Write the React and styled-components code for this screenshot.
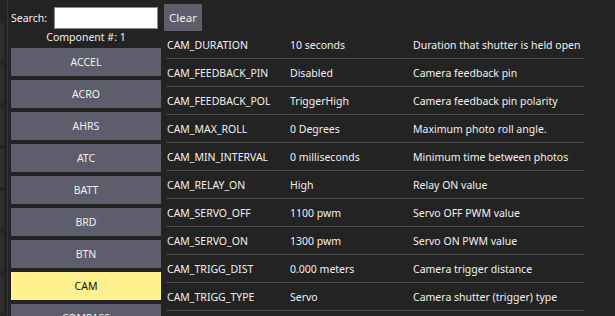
import React from 'react'
import styled, { createGlobalStyle } from 'styled-components'

const GlobalStyle = createGlobalStyle`
    html, body {
        margin: 0;
        background: #232323;
        font-family: "Noto Sans", "Open Sans", sans-serif;
        font-size: 10.5px;
        color: #f0f0f0;
        overflow: hidden;
    }
`

const Page = styled.div`
    display: flex;
    height: 316px;
`

const Strip = styled.div`
    width: 4px;
    display: flex;
    flex-direction: column;
    gap: 4px;
    padding-top: 23px;
`

const StripBlock = styled.div`
    height: 38px;
    flex-shrink: 0;
    background: #2e2e2e;
`

const Divider = styled.div`
    width: 1px;
    margin-left: 3px;
    background: #353535;
`

const Main = styled.div`
    display: grid;
    grid-template-columns: 150px 1fr;
    grid-template-rows: 31px 1fr;
    column-gap: 3px;
    margin-left: 3px;
`

const SearchRow = styled.div`
    display: flex;
    align-items: flex-start;
    gap: 4px;
    padding-top: 7px;
`

const Label = styled.label`
    width: 39px;
    line-height: 22px;
`

const SearchInput = styled.input`
    width: 104px;
    height: 22px;
    box-sizing: border-box;
    border: 1px solid #8a8a8a;
    background: #fff;
    padding: 0 3px;
    margin: 0;
    outline: none;
`

const HeaderCell = styled.div`
    display: flex;
    align-items: flex-start;
    padding-top: 4px;
`

const ClearButton = styled.button`
    height: 27px;
    width: 38px;
    padding: 0;
    border: none;
    background: #5e5d6c;
    color: #f0f0f0;
    font-family: inherit;
    font-size: 11.5px;
`

const Sidebar = styled.div`
    display: flex;
    flex-direction: column;
    gap: 4px;
    overflow: hidden;
`

const Count = styled.div`
    text-align: center;
    line-height: 13px;
`

const Component = styled.div`
    height: 28px;
    flex-shrink: 0;
    display: flex;
    align-items: center;
    justify-content: center;
    background: ${({ $active }) => ($active ? '#fff18e' : '#5e5d6c')};
    color: ${({ $active }) => ($active ? '#111' : '#f0f0f0')};
`

const Table = styled.div`
    margin-left: 2px;
    width: 418px;
`

const Row = styled.div`
    display: grid;
    grid-template-columns: 123px 123px 1fr;
    height: 27px;
    align-items: center;
    border-bottom: 1px solid #4a4a4a;
    padding-left: 1px;
`

const Cell = styled.div`
    white-space: nowrap;
`

const components = ['ACCEL', 'ACRO', 'AHRS', 'ATC', 'BATT', 'BRD', 'BTN', 'CAM', 'COMPASS']

const params = [
    ['CAM_DURATION', '10 seconds', 'Duration that shutter is held open'],
    ['CAM_FEEDBACK_PIN', 'Disabled', 'Camera feedback pin'],
    ['CAM_FEEDBACK_POL', 'TriggerHigh', 'Camera feedback pin polarity'],
    ['CAM_MAX_ROLL', '0 Degrees', 'Maximum photo roll angle.'],
    ['CAM_MIN_INTERVAL', '0 milliseconds', 'Minimum time between photos'],
    ['CAM_RELAY_ON', 'High', 'Relay ON value'],
    ['CAM_SERVO_OFF', '1100 pwm', 'Servo OFF PWM value'],
    ['CAM_SERVO_ON', '1300 pwm', 'Servo ON PWM value'],
    ['CAM_TRIGG_DIST', '0.000 meters', 'Camera trigger distance'],
    ['CAM_TRIGG_TYPE', 'Servo', 'Camera shutter (trigger) type'],
]

const App = () => {
  return (
    <Page>
        <GlobalStyle />
        <Strip>
            {[0, 1, 2, 3, 4, 5, 6, 7].map(i => <StripBlock key={i} />)}
        </Strip>
        <Divider />
        <Main>
            <SearchRow>
                <Label>Search:</Label>
                <SearchInput />
            </SearchRow>
            <HeaderCell>
                <ClearButton>Clear</ClearButton>
            </HeaderCell>
            <Sidebar>
                <Count>Component #: 1</Count>
                {components.map(c => (
                    <Component key={c} $active={c === 'CAM'}>{c}</Component>
                ))}
            </Sidebar>
            <Table>
                {params.map(([name, value, desc]) => (
                    <Row key={name}>
                        <Cell>{name}</Cell>
                        <Cell>{value}</Cell>
                        <Cell>{desc}</Cell>
                    </Row>
                ))}
            </Table>
        </Main>
    </Page>
  )
}

export default App
